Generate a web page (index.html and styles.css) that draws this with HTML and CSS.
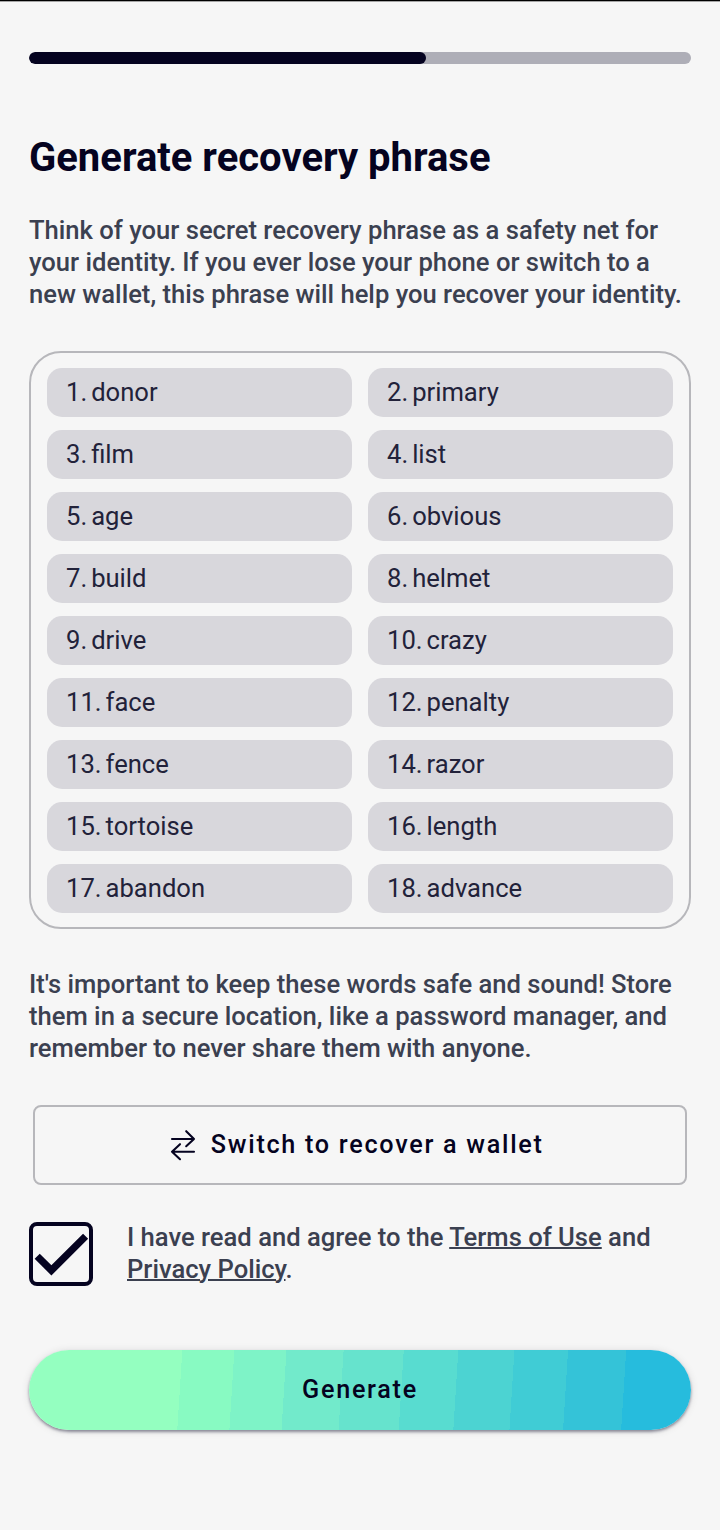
FILE: index.html
```html
<!DOCTYPE html>
<html lang="en">
<head>
<meta charset="utf-8">
<title>Generate recovery phrase</title>
<link rel="stylesheet" href="styles.css">
</head>
<body>
<main class="screen">
  <div class="progress"><div class="progress-fill"></div></div>
  <h1 class="title">Generate recovery phrase</h1>
  <p class="copy">Think of your secret recovery phrase as a safety net for<br>your identity. If you ever lose your phone or switch to a<br>new wallet, this phrase will help you recover your identity.</p>
  <div class="words">
    <div class="word"><span>1.</span><span>donor</span></div>
    <div class="word"><span>2.</span><span>primary</span></div>
    <div class="word"><span>3.</span><span>film</span></div>
    <div class="word"><span>4.</span><span>list</span></div>
    <div class="word"><span>5.</span><span>age</span></div>
    <div class="word"><span>6.</span><span>obvious</span></div>
    <div class="word"><span>7.</span><span>build</span></div>
    <div class="word"><span>8.</span><span>helmet</span></div>
    <div class="word"><span>9.</span><span>drive</span></div>
    <div class="word"><span>10.</span><span>crazy</span></div>
    <div class="word"><span>11.</span><span>face</span></div>
    <div class="word"><span>12.</span><span>penalty</span></div>
    <div class="word"><span>13.</span><span>fence</span></div>
    <div class="word"><span>14.</span><span>razor</span></div>
    <div class="word"><span>15.</span><span>tortoise</span></div>
    <div class="word"><span>16.</span><span>length</span></div>
    <div class="word"><span>17.</span><span>abandon</span></div>
    <div class="word"><span>18.</span><span>advance</span></div>
  </div>
  <p class="copy copy-safety">It's important to keep these words safe and sound! Store<br>them in a secure location, like a password manager, and<br>remember to never share them with anyone.</p>
  <button class="switch" type="button">
    <svg class="switch-icon" width="26" height="32" viewBox="0 0 26 32" fill="none" stroke="currentColor" stroke-width="2.1" stroke-linecap="round" stroke-linejoin="round"><path d="M2 10H24M16.2 2.2L24 10L16.2 17.2M24 22.8H2M10 15.2L2 22.8L10 30.2"/></svg>
    <span>Switch to recover a wallet</span>
  </button>
  <div class="consent">
    <div class="checkbox" role="checkbox" aria-checked="true">
      <svg width="56" height="56" viewBox="0 0 56 56" fill="none" stroke="currentColor" stroke-width="7.2"><path d="M4.2 30.2L18.4 44.4L52.6 10.2"/></svg>
    </div>
    <p class="copy copy-consent">I have read and agree to the <a class="link">Terms of Use</a> and<br><a class="link">Privacy Policy</a>.</p>
  </div>
  <button class="generate" type="button">Generate</button>
</main>
</body>
</html>
```
FILE: styles.css
```css
* { box-sizing: border-box; }

body {
  margin: 0;
  background: #f6f6f6;
  font-family: Roboto, "Liberation Sans", sans-serif;
  color: #050320;
}

.screen {
  height: 1530px;
  padding: 50px 29px 0;
  border-top: 1px solid #000;
  box-shadow: inset 0 1px 0 #a5a5a5;
  display: flex;
  flex-direction: column;
}

.progress {
  height: 11.5px;
  margin-top: 1px;
  border-radius: 6px;
  background: #aeaeb7;
  overflow: hidden;
  flex: none;
}

.progress-fill {
  width: 60%;
  height: 100%;
  border-radius: 6px;
  background: #050320;
}

.title {
  margin: 70.5px 0 0;
  font-size: 40px;
  line-height: 48px;
  font-weight: 700;
  white-space: nowrap;
}

.copy {
  margin: 32px 0 0;
  font-size: 25.6px;
  line-height: 32px;
  font-weight: 500;
  color: #3b4050;
  white-space: nowrap;
}

.words {
  height: 578px;
  margin-top: 41px;
  padding: 15px 16px;
  border: 2px solid #b7b7bb;
  border-radius: 32px;
  display: grid;
  grid-template-columns: 1fr 1fr;
  grid-auto-rows: 49px;
  gap: 13px 16px;
  flex: none;
}

.word {
  padding: 0 0 2px 19px;
  border-radius: 15px;
  background: #d8d7dc;
  display: flex;
  align-items: center;
  gap: 4px;
  font-size: 25.6px;
  line-height: 32px;
  color: #22223a;
}

.copy-safety { margin-top: 39px; }

.switch {
  width: 654px;
  height: 80px;
  margin: 41px auto 0;
  padding: 0 6.5px 0 0;
  border: 2px solid #b7b7bb;
  border-radius: 8px;
  background: transparent;
  display: flex;
  align-items: center;
  justify-content: center;
  gap: 15px;
  font: 500 25.2px/32px Roboto, "Liberation Sans", sans-serif;
  letter-spacing: 1.72px;
  color: #050320;
  flex: none;
}

.consent {
  height: 64px;
  margin-top: 37px;
  display: flex;
  align-items: center;
  gap: 34px;
  flex: none;
}

.checkbox {
  width: 64px;
  height: 64px;
  border: 4px solid #050320;
  border-radius: 8px;
  flex: none;
}

.checkbox svg { display: block; }

.copy-consent {
  margin: 0;
  padding-bottom: 2px;
}

.link {
  text-decoration: underline;
  text-decoration-thickness: 2px;
}

.generate {
  height: 80px;
  margin-top: 64px;
  padding: 0;
  border: 0;
  border-radius: 40px;
  background: linear-gradient(93.6deg,
    #94ffc0 153px, #88fac2 153px 205px, #7ef3c7 205px 257px,
    #72eacb 257px 314px, #66e3cd 314px 374px, #58dcd0 374px 428.5px,
    #4cd3d2 428.5px 484.5px, #40ccd5 484.5px 538px,
    #34c3d8 538px 596px, #26bcdd 596px);
  box-shadow: 0 2px 3px rgba(5, 3, 32, .4), 0 1px 8px rgba(5, 3, 32, .12);
  font: 500 25.2px/32px Roboto, "Liberation Sans", sans-serif;
  letter-spacing: 1.72px;
  color: #050320;
  flex: none;
}
```
